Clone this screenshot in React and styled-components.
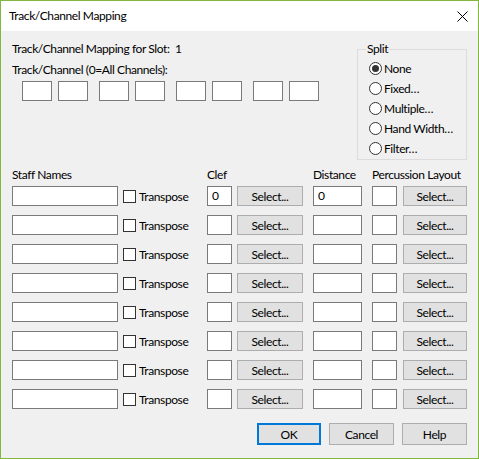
import React from "react";
import styled, { createGlobalStyle } from "styled-components";

const GlobalStyle = createGlobalStyle`
  html, body {
    margin: 0;
    padding: 0;
    background: #ffffff;
  }
  * {
    box-sizing: border-box;
  }
`;

const FONT = `Lato, "Noto Sans", sans-serif`;

const Window = styled.div`
  width: 479px;
  height: 459px;
  border: 1px solid #83b83e;
  display: flex;
  flex-direction: column;
  font-family: ${FONT};
  font-size: 12px;
  letter-spacing: -0.4px;
  color: #000;
`;

const TitleBar = styled.div`
  height: 30px;
  flex: 0 0 30px;
  background: #ffffff;
  display: flex;
  align-items: center;
  justify-content: space-between;
  padding: 0 10px 0 8px;
`;

const Title = styled.span`
  line-height: 16px;
`;

const Body = styled.div`
  flex: 1;
  background: #f0f0f0;
  padding: 10px 11px 0 11px;
  display: flex;
  flex-direction: column;
`;

const TopSection = styled.div`
  display: flex;
  justify-content: space-between;
  align-items: flex-start;
`;

const LeftColumn = styled.div`
  display: flex;
  flex-direction: column;
`;

const Line = styled.div`
  height: 16px;
  line-height: 16px;
  display: flex;
  white-space: nowrap;
  margin-top: ${({ $gap }) => $gap || 0}px;
`;

const SlotLabel = styled.span`
  width: 163px;
`;

const TrackBoxes = styled.div`
  display: flex;
  gap: 11px;
  margin: 3px 0 0 10px;
`;

const Pair = styled.div`
  display: flex;
  gap: 6px;
`;

const Field = styled.div`
  width: ${({ $w }) => $w}px;
  height: 20px;
  background: #ffffff;
  border: 1px solid #7a7a7a;
  padding-left: 4px;
  line-height: 18px;
`;

const Group = styled.fieldset`
  width: 110px;
  margin: 0;
  padding: 0 0 1px 11px;
  border: 1px solid #dcdcdc;
`;

const Legend = styled.legend`
  padding: 0 1px;
  margin-left: -3px;
  line-height: 16px;
`;

const RadioList = styled.div`
  margin-top: 1px;
  display: flex;
  flex-direction: column;
`;

const RadioRow = styled.div`
  height: 20px;
  display: flex;
  align-items: center;
  gap: 2px;
  white-space: nowrap;
`;

const RadioCircle = styled.span`
  width: 13px;
  height: 13px;
  border-radius: 50%;
  border: 1px solid #333333;
  background: #ffffff;
  display: flex;
  align-items: center;
  justify-content: center;
  &::after {
    content: "";
    width: 7px;
    height: 7px;
    border-radius: 50%;
    background: ${({ $checked }) => ($checked ? "#333333" : "transparent")};
  }
`;

const Grid = styled.div`
  margin-top: 7px;
  display: grid;
  grid-template-columns: 111px 84px 30px 76px 59px 31px 64px;
  grid-template-rows: 19px;
  grid-auto-rows: 29px;
  align-items: start;
`;

const ColLabel = styled.span`
  line-height: 16px;
  grid-column: ${({ $col }) => $col};
  white-space: nowrap;
`;

const Check = styled.label`
  height: 20px;
  display: flex;
  align-items: center;
  gap: 3px;
`;

const CheckBox = styled.span`
  width: 13px;
  height: 13px;
  border: 1px solid #333333;
  background: #ffffff;
`;

const Button = styled.button`
  width: ${({ $w }) => $w}px;
  height: ${({ $h }) => $h || 20}px;
  padding: 0;
  font-family: ${FONT};
  font-size: 12px;
  letter-spacing: inherit;
  color: #000;
  background: #e1e1e1;
  border: ${({ $primary }) =>
    $primary ? "2px solid #0078d7" : "1px solid #adadad"};
`;

const Footer = styled.div`
  margin-top: 5px;
  display: flex;
  justify-content: flex-end;
  gap: 8px;
`;

const splitOptions = ["None", "Fixed…", "Multiple…", "Hand Width…", "Filter…"];

const CloseIcon = () => (
  <svg width="11" height="11" viewBox="0 0 11 11">
    <path d="M0.5 0.5 L10.5 10.5 M10.5 0.5 L0.5 10.5" stroke="#000" strokeWidth="1" />
  </svg>
);

const StaffRow = ({ first }) => (
  <>
    <Field $w={106} />
    <Check>
      <CheckBox />
      Transpose
    </Check>
    <Field $w={25}>{first ? "0" : ""}</Field>
    <Button $w={66}>Select...</Button>
    <Field $w={49}>{first ? "0" : ""}</Field>
    <Field $w={25} />
    <Button $w={64}>Select...</Button>
  </>
);

export default function App() {
  return (
    <>
      <GlobalStyle />
      <Window>
        <TitleBar>
          <Title>Track/Channel Mapping</Title>
          <CloseIcon />
        </TitleBar>
        <Body>
          <TopSection>
            <LeftColumn>
              <Line>
                <SlotLabel>Track/Channel Mapping for Slot:</SlotLabel>
                <span>1</span>
              </Line>
              <Line $gap={5}>Track/Channel (0=All Channels):</Line>
              <TrackBoxes>
                {[0, 1, 2, 3].map((p) => (
                  <Pair key={p}>
                    <Field $w={30} />
                    <Field $w={30} />
                  </Pair>
                ))}
              </TrackBoxes>
            </LeftColumn>
            <Group>
              <Legend>Split</Legend>
              <RadioList>
                {splitOptions.map((opt, i) => (
                  <RadioRow key={opt}>
                    <RadioCircle $checked={i === 0} />
                    {opt}
                  </RadioRow>
                ))}
              </RadioList>
            </Group>
          </TopSection>

          <Grid>
            <ColLabel $col="1">Staff Names</ColLabel>
            <ColLabel $col="3">Clef</ColLabel>
            <ColLabel $col="5">Distance</ColLabel>
            <ColLabel $col="6 / span 2">Percussion Layout</ColLabel>
            {Array.from({ length: 8 }).map((_, i) => (
              <StaffRow key={i} first={i === 0} />
            ))}
          </Grid>

          <Footer>
            <Button $w={64} $h={22} $primary>
              OK
            </Button>
            <Button $w={65} $h={22}>
              Cancel
            </Button>
            <Button $w={65} $h={22}>
              Help
            </Button>
          </Footer>
        </Body>
      </Window>
    </>
  );
}
